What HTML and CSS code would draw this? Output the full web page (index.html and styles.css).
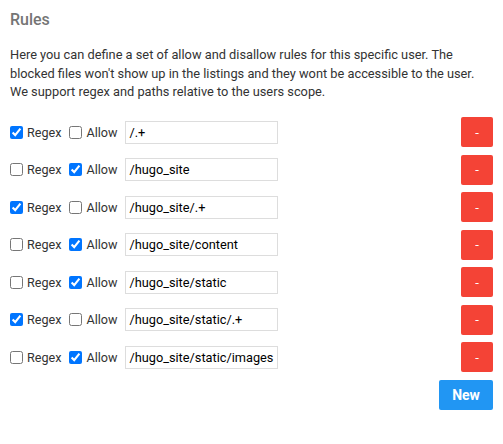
FILE: index.html
```html
<!DOCTYPE html>
<html>
<head>
<meta charset="utf-8">
<link rel="stylesheet" href="styles.css">
</head>
<body>
<div class="card">
  <h2 class="title">Rules</h2>
  <p class="desc">Here you can define a set of allow and disallow rules for this specific user. The blocked files won't show up in the listings and they wont be accessible to the user. We support regex and paths relative to the users scope.</p>
  <form class="rules">
    <div class="rule">
      <input type="checkbox" checked><label>Regex</label>
      <input type="checkbox"><label>Allow</label>
      <input type="text" class="path" value="/.+">
      <button type="button" class="btn btn-red">-</button>
    </div>
    <div class="rule">
      <input type="checkbox"><label>Regex</label>
      <input type="checkbox" checked><label>Allow</label>
      <input type="text" class="path" value="/hugo_site">
      <button type="button" class="btn btn-red">-</button>
    </div>
    <div class="rule">
      <input type="checkbox" checked><label>Regex</label>
      <input type="checkbox"><label>Allow</label>
      <input type="text" class="path" value="/hugo_site/.+">
      <button type="button" class="btn btn-red">-</button>
    </div>
    <div class="rule">
      <input type="checkbox"><label>Regex</label>
      <input type="checkbox" checked><label>Allow</label>
      <input type="text" class="path" value="/hugo_site/content">
      <button type="button" class="btn btn-red">-</button>
    </div>
    <div class="rule">
      <input type="checkbox"><label>Regex</label>
      <input type="checkbox" checked><label>Allow</label>
      <input type="text" class="path" value="/hugo_site/static">
      <button type="button" class="btn btn-red">-</button>
    </div>
    <div class="rule">
      <input type="checkbox" checked><label>Regex</label>
      <input type="checkbox"><label>Allow</label>
      <input type="text" class="path" value="/hugo_site/static/.+">
      <button type="button" class="btn btn-red">-</button>
    </div>
    <div class="rule">
      <input type="checkbox"><label>Regex</label>
      <input type="checkbox" checked><label>Allow</label>
      <input type="text" class="path" value="/hugo_site/static/images">
      <button type="button" class="btn btn-red">-</button>
    </div>
    <div class="rule">
      <button type="button" class="btn btn-blue">New</button>
    </div>
  </form>
</div>
</body>
</html>
```
FILE: styles.css
```css
html, body {
  margin: 0;
  padding: 0;
  background: #fff;
}
body {
  font-family: Roboto, "Liberation Sans", sans-serif;
  color: #333;
}
.card {
  padding: 10px 10px 10px 10px;
}
.title {
  margin: 0;
  font-size: 16px;
  line-height: 20px;
  font-weight: 500;
  color: #757575;
}
.desc {
  margin: 16px 0 0 0;
  font-size: 12.8px;
  line-height: 18.5px;
  color: #333;
}
.rules {
  margin-top: 15.5px;
}
.rule {
  display: flex;
  align-items: center;
  height: 30px;
  margin-bottom: 7.5px;
  font-size: 12.6px;
}
.rule input[type=checkbox] {
  margin: 0 4px 0 0;
  width: 13px;
  height: 13px;
}
.rule label {
  margin-right: 8px;
  color: #333;
}
.path {
  width: 153px;
  height: 23px;
  box-sizing: border-box;
  border: 1px solid #ddd;
  padding: 0 3px;
  font-family: Roboto, "Liberation Sans", sans-serif;
  font-size: 12.75px;
  color: #000;
  outline: none;
}
.btn {
  margin-left: auto;
  height: 30px;
  border: 0;
  border-radius: 2px;
  color: #fff;
  font-family: Roboto, "Liberation Sans", sans-serif;
  font-size: 13px;
  padding: 0;
  cursor: pointer;
}
.btn-red {
  width: 32px;
  background: #f44336;
}
.btn-blue {
  width: 54px;
  background: #2196f3;
  font-weight: 700;
  font-size: 14px;
}
```
